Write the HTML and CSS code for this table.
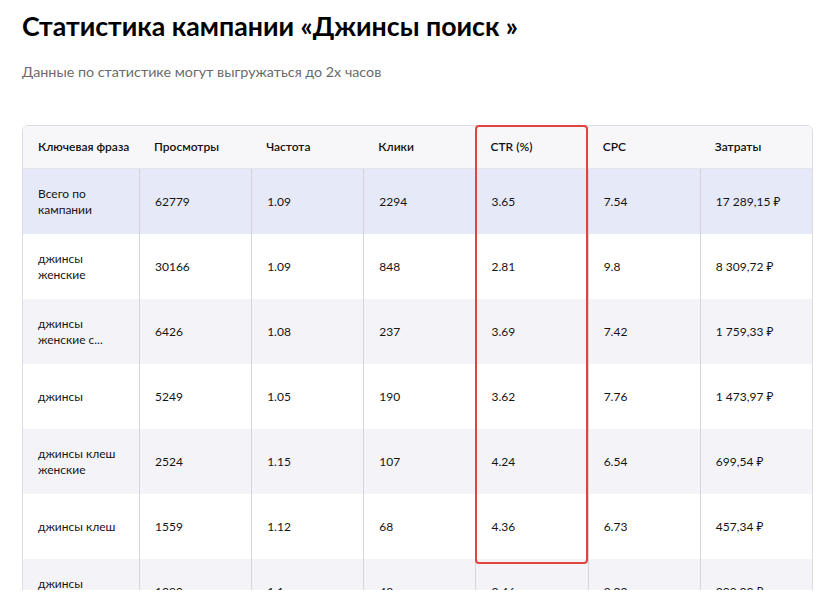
FILE: index.html
```html
<!DOCTYPE html>
<html lang="ru">
<head>
<meta charset="utf-8">
<link rel="stylesheet" href="styles.css">
</head>
<body>
<div class="page">
  <h1 class="title">Статистика кампании «Джинсы поиск »</h1>
  <p class="subtitle">Данные по статистике могут выгружаться до 2х часов</p>
  <div class="table-wrap">
    <div class="table">
      <div class="row head">
        <div class="cell">Ключевая фраза</div>
        <div class="cell">Просмотры</div>
        <div class="cell">Частота</div>
        <div class="cell">Клики</div>
        <div class="cell">CTR (%)</div>
        <div class="cell">CPC</div>
        <div class="cell">Затраты</div>
      </div>
      <div class="row total">
        <div class="cell">Всего по<br>кампании</div>
        <div class="cell">62779</div>
        <div class="cell">1.09</div>
        <div class="cell">2294</div>
        <div class="cell">3.65</div>
        <div class="cell">7.54</div>
        <div class="cell">17 289,15 ₽</div>
      </div>
      <div class="row">
        <div class="cell">джинсы<br>женские</div>
        <div class="cell">30166</div>
        <div class="cell">1.09</div>
        <div class="cell">848</div>
        <div class="cell">2.81</div>
        <div class="cell">9.8</div>
        <div class="cell">8 309,72 ₽</div>
      </div>
      <div class="row alt">
        <div class="cell">джинсы<br>женские с...</div>
        <div class="cell">6426</div>
        <div class="cell">1.08</div>
        <div class="cell">237</div>
        <div class="cell">3.69</div>
        <div class="cell">7.42</div>
        <div class="cell">1 759,33 ₽</div>
      </div>
      <div class="row">
        <div class="cell">джинсы</div>
        <div class="cell">5249</div>
        <div class="cell">1.05</div>
        <div class="cell">190</div>
        <div class="cell">3.62</div>
        <div class="cell">7.76</div>
        <div class="cell">1 473,97 ₽</div>
      </div>
      <div class="row alt">
        <div class="cell">джинсы клеш<br>женские</div>
        <div class="cell">2524</div>
        <div class="cell">1.15</div>
        <div class="cell">107</div>
        <div class="cell">4.24</div>
        <div class="cell">6.54</div>
        <div class="cell">699,54 ₽</div>
      </div>
      <div class="row">
        <div class="cell">джинсы клеш</div>
        <div class="cell">1559</div>
        <div class="cell">1.12</div>
        <div class="cell">68</div>
        <div class="cell">4.36</div>
        <div class="cell">6.73</div>
        <div class="cell">457,34 ₽</div>
      </div>
      <div class="row alt">
        <div class="cell">джинсы<br>женские</div>
        <div class="cell">1389</div>
        <div class="cell">1.1</div>
        <div class="cell">48</div>
        <div class="cell">3.46</div>
        <div class="cell">8.22</div>
        <div class="cell">399,33 ₽</div>
      </div>
    </div>
    <div class="highlight"></div>
  </div>
</div>
</body>
</html>
```
FILE: styles.css
```css
html, body {
  margin: 0;
  padding: 0;
  background: #ffffff;
}
body {
  font-family: Lato, "Noto Sans", sans-serif;
  color: #1a1a1a;
}
.page {
  padding: 9px 20px 0 22px;
}
.title {
  margin: 0;
  font-size: 26.7px;
  line-height: 34px;
  font-weight: 700;
  color: #000;
}
.subtitle {
  margin: 19px 0 0;
  font-size: 14.3px;
  line-height: 20px;
  color: #6b6b6b;
}
.table-wrap {
  position: relative;
  margin-top: 43px;
  width: 791px;
  height: 465px;
  overflow: hidden;
}
.table {
  border: 1px solid #dcdce2;
  border-radius: 6px;
  overflow: hidden;
}
.row {
  display: grid;
  grid-template-columns: 116px repeat(6, 1fr);
  height: 65px;
  background: #ffffff;
}
.row.alt {
  background: #f4f4f8;
}
.row.total {
  background: #e5e9f8;
}
.row.head {
  height: 42px;
  background: #f7f7f9;
  border-bottom: 1px solid #e4e4ea;
}
.cell {
  display: flex;
  align-items: center;
  padding: 0 4px 0 15px;
  font-size: 12px;
  line-height: 16px;
  color: #141414;
  border-left: 1px solid #d4d4da;
  white-space: nowrap;
}
.cell:first-child {
  border-left: none;
}
.head .cell {
  border-left: none;
  font-weight: 600;
  color: #111;
}
.highlight {
  position: absolute;
  box-sizing: border-box;
  left: 453px;
  top: 0;
  width: 113px;
  height: 439px;
  border: 2.5px solid #e0443f;
  border-radius: 4px;
}
```
